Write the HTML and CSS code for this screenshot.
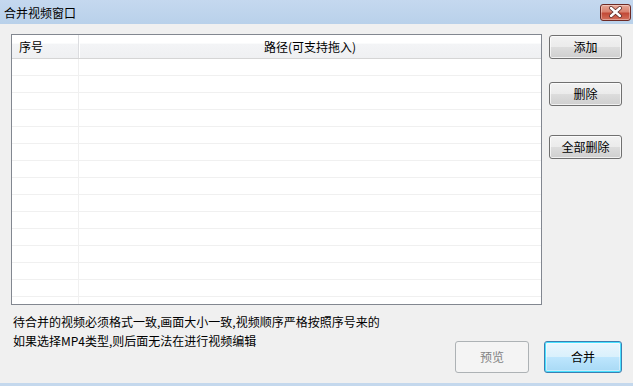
FILE: index.html
```html
<!DOCTYPE html>
<html lang="zh">
<head>
<meta charset="utf-8">
<title>合并视频窗口</title>
<link rel="stylesheet" href="styles.css">
</head>
<body>
<div class="window">
  <div class="titlebar">
    <span class="title">合并视频窗口</span>
    <div class="close">
      <svg width="31" height="17" viewBox="0 0 31 17">
        <path d="M11 4 L20 12 M20 4 L11 12" stroke="#5a2a28" stroke-width="4" stroke-linecap="round"/>
        <path d="M11 4 L20 12 M20 4 L11 12" stroke="#ffffff" stroke-width="2.4" stroke-linecap="round"/>
      </svg>
    </div>
  </div>
  <div class="content">
    <div class="main">
      <div class="list">
        <div class="list-head">
          <div class="cell c1 head-cell">序号</div>
          <div class="cell c2 head-cell center">路径(可支持拖入)</div>
        </div>
        <div class="list-body">
          <div class="row"><div class="cell c1"></div><div class="cell c2"></div></div>
          <div class="row"><div class="cell c1"></div><div class="cell c2"></div></div>
          <div class="row"><div class="cell c1"></div><div class="cell c2"></div></div>
          <div class="row"><div class="cell c1"></div><div class="cell c2"></div></div>
          <div class="row"><div class="cell c1"></div><div class="cell c2"></div></div>
          <div class="row"><div class="cell c1"></div><div class="cell c2"></div></div>
          <div class="row"><div class="cell c1"></div><div class="cell c2"></div></div>
          <div class="row"><div class="cell c1"></div><div class="cell c2"></div></div>
          <div class="row"><div class="cell c1"></div><div class="cell c2"></div></div>
          <div class="row"><div class="cell c1"></div><div class="cell c2"></div></div>
          <div class="row"><div class="cell c1"></div><div class="cell c2"></div></div>
          <div class="row"><div class="cell c1"></div><div class="cell c2"></div></div>
          <div class="row"><div class="cell c1"></div><div class="cell c2"></div></div>
          <div class="row"><div class="cell c1"></div><div class="cell c2"></div></div>
          <div class="row"><div class="cell c1"></div><div class="cell c2"></div></div>
        </div>
      </div>
      <div class="side">
        <button class="btn btn-add">添加</button>
        <button class="btn btn-del">删除</button>
        <button class="btn btn-delall">全部删除</button>
      </div>
    </div>
    <div class="footer">
      <div class="notes">
        <div class="note">待合并的视频必须格式一致,画面大小一致,视频顺序严格按照序号来的</div>
        <div class="note">如果选择MP4类型,则后面无法在进行视频编辑</div>
      </div>
      <div class="actions">
        <button class="btn btn-big btn-disabled">预览</button>
        <button class="btn btn-big btn-default">合并</button>
      </div>
    </div>
  </div>
</div>
</body>
</html>
```

FILE: styles.css
```css
* { box-sizing: border-box; }
html, body {
  margin: 0;
  padding: 0;
  width: 633px;
  height: 386px;
  overflow: hidden;
  background: #f0f0f0;
}
body {
  font-family: "Noto Sans CJK SC", "Microsoft YaHei", sans-serif;
  font-size: 12px;
  color: #000;
}
.window {
  width: 633px;
  height: 386px;
  display: flex;
  flex-direction: column;
  background: #f0f0f0;
  border-bottom: 3px solid #c4d8ed;
}
.titlebar {
  height: 24px;
  flex: none;
  display: flex;
  justify-content: space-between;
  background: linear-gradient(#c5d8ef, #b9d1ea);
  padding-left: 4px;
}
.title {
  line-height: 25px;
  font-size: 12px;
  color: #000;
}
.close {
  width: 31px;
  height: 17px;
  margin-top: 4px;
  margin-right: 2px;
  border: 1px solid #6d2a25;
  border-radius: 3px;
  background: linear-gradient(#e7a796 0%, #d9826f 45%, #c24a37 55%, #d3705c 100%);
  box-shadow: inset 0 0 0 1px rgba(255,255,255,0.35);
  display: flex;
  align-items: center;
  justify-content: center;
  overflow: hidden;
}
.close svg { display: block; flex: none; }
.content {
  flex: 1;
  padding: 10px 11px 0 11px;
  display: flex;
  flex-direction: column;
}
.main {
  display: flex;
  gap: 7px;
}
.list {
  width: 532px;
  height: 271px;
  border: 1px solid #828790;
  background: #fff;
  overflow: hidden;
}
.list-head {
  display: flex;
  height: 24px;
  background: linear-gradient(#ffffff 0%, #ffffff 35%, #f3f4f6 40%, #eff0f2 100%);
  border-bottom: 1px solid #d5d5d5;
}
.cell {
  height: 100%;
}
.c1 {
  width: 67px;
  flex: none;
  border-right: 1px solid #f0f0f0;
}
.c2 { flex: 1; }
.head-cell {
  line-height: 23px;
  padding-left: 7px;
}
.list-head .c1 {
  border-right: 1px solid #dcdde0;
  box-shadow: 1px 0 0 #ffffff;
}
.center {
  text-align: center;
  padding-left: 0;
}
.row {
  display: flex;
  height: 17px;
  border-bottom: 1px solid #f0f0f0;
}
.side {
  display: flex;
  flex-direction: column;
  padding-top: 1px;
}
.btn {
  font-family: "Noto Sans CJK SC", "Microsoft YaHei", sans-serif;
  font-size: 12px;
  color: #000;
  width: 73px;
  height: 24px;
  padding: 0;
  border: 1px solid #707070;
  border-radius: 3px;
  background: linear-gradient(#f2f2f2 0%, #ebebeb 50%, #dddddd 50%, #cfcfcf 100%);
  box-shadow: inset 0 0 0 1px rgba(255,255,255,0.7);
  line-height: 20px;
}
.btn-del { margin-top: 23px; }
.btn-delall { margin-top: 29px; }
.footer {
  display: flex;
  justify-content: space-between;
  padding-top: 7px;
}
.notes {
  padding-left: 2px;
}
.note {
  line-height: 19px;
  white-space: nowrap;
}
.actions {
  display: flex;
  gap: 15px;
  padding-top: 29px;
}
.btn-big {
  height: 32px;
}
.btn-disabled {
  width: 74px;
  color: #838383;
  border-color: #adb2b5;
  background: #f4f4f4;
  box-shadow: none;
}
.btn-default {
  width: 78px;
  border-color: #3c7fb1;
  background: linear-gradient(#eaf6fd 0%, #d9f0fc 50%, #bee6fd 50%, #a7d9f5 100%);
  box-shadow: inset 0 0 0 1px #48e1ff, inset 0 0 0 2px rgba(255,255,255,0.4);
}
```
